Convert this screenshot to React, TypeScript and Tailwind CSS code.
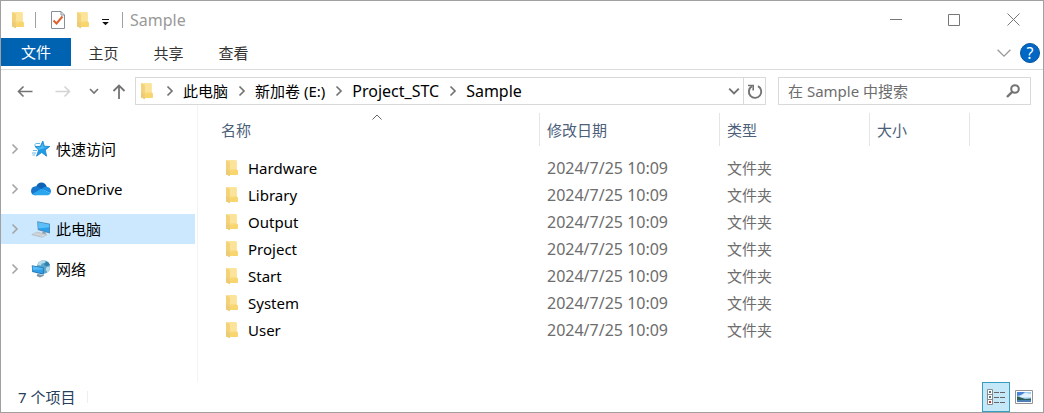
import type { ReactNode } from "react"

const folders = ["Hardware", "Library", "Output", "Project", "Start", "System", "User"]

const crumbs = [
  { name: "此电脑", className: "text-[15px]" },
  { name: "新加卷 (E:)", className: "text-[15px]" },
  { name: "Project_STC", className: "text-base" },
  { name: "Sample", className: "text-base" },
]

function FolderIcon() {
  return (
    <svg width="14" height="18" viewBox="0 0 14 18" className="shrink-0" aria-hidden="true">
      <path d="M1 1.300h9.800c.5 0 .8.300.8.800v8.400l1.200.9v3.900c0 .4-.3.600-.7.600H1z" fill="#f9dc84" />
      <path d="M4.500 1.300h6.300c.5 0 .8.300.8.800v8H4.500z" fill="#fbe499" />
      <path d="M1 1.300l3.200 1.800c.5.300.7.600.7 1.200v12.900L1 15.200z" fill="#f3d27a" />
      <path d="M1 10l3.900 2.500v4.700L1 15.200z" fill="#eccb78" />
      <path d="M4.900 11.500c4 .5 5.500-.5 6.700-1l1.200.9v3.900c0 .4-.3.600-.7.600H4.900z" fill="#f8d56d" />
    </svg>
  )
}

function Chevron({ className = "" }: { className?: string }) {
  return (
    <svg width="10" height="12" viewBox="0 0 10 12" className={`shrink-0 ${className}`} aria-hidden="true">
      <path d="M2.500 1.500L7 6l-4.500 4.500" fill="none" stroke="currentColor" strokeWidth="1.700" />
    </svg>
  )
}

function ChevronDown({ size = 10, strokeWidth = 1.6 }: { size?: number; strokeWidth?: number }) {
  return (
    <svg width={size} height={size} viewBox="0 0 10 10" aria-hidden="true">
      <path d="M1 3l4 4 4-4" fill="none" stroke="currentColor" strokeWidth={strokeWidth} />
    </svg>
  )
}

function StarIcon() {
  return (
    <svg width="20" height="18" viewBox="0 0 20 18" aria-hidden="true">
      <path d="M11.800 1l1.500 5.200 5.500.3-4.500 3.400 1.300 6.300-4.900-3.700-5.200 3.700 2.100-6.200L4 6.500l5.400-.2z" fill="#1f9be3" stroke="#1684cc" strokeWidth=".8" />
      <path d="M11.600 3.200l1.100 4 3.600.2-8.300 2.400-2-2.500 4-.2z" fill="#4cb9f3" />
      <path d="M4.500 3.500h4.500M3 5h2M2 10.500h4M1 13h4M1.500 15h2.500" stroke="#69b9e8" strokeWidth="1" />
    </svg>
  )
}

function OneDriveIcon() {
  return (
    <svg width="20" height="14" viewBox="0 0 20 14" aria-hidden="true">
      <path d="M5.200 4.300C6.300 2 8 .6 10.400.6c2.700 0 4.700 1.600 5.300 4.200L9 9.600z" fill="#0f62b4" />
      <path d="M4.500 13.300C1.900 13.300 0 11.400 0 8.900c0-2.700 2-4.600 4.600-4.700 1.200 0 2 .3 3 .9l5.900 3.600-8.900 4.600z" fill="#1576cc" />
      <path d="M10.800 7.100c1-1.600 2.800-2.500 4.700-2.300 2.600.1 4.500 1.900 4.500 4.300 0 .8-.2 1.600-.6 2.200z" fill="#1a8ee2" />
      <path d="M10.300 6.800l9.200 4.400c-.8 1.400-2 2.100-3.700 2.100H4.500c-1.300 0-2.400-.5-3.200-1.400z" fill="#2aa6ee" />
    </svg>
  )
}

function ComputerIcon() {
  return (
    <svg width="20" height="18" viewBox="0 0 20 18" aria-hidden="true">
      <path d="M6.200 1.200l12.800 2.600v9.700L6.800 10z" fill="#4f87ad" />
      <path d="M7.100 2.200l11.100 2.300v7.900L7.600 9.300z" fill="#2ba0ec" />
      <path d="M7.100 2.200l11.100 2.300v2.700L7.400 8.600z" fill="#5bbffa" />
      <path d="M11.500 11.400l3.500 1-.6 1.900-3.200-.8z" fill="#8b9ba6" />
      <path d="M.8 14.700l5.300-2.600 9.800 2.600-4.700 2.600z" fill="#dcdfe2" stroke="#a5aeb5" strokeWidth=".6" />
      <path d="M3.500 14.500l8 1.800M5.500 13.500l8 1.600" stroke="#b1b7bc" strokeWidth=".5" />
    </svg>
  )
}

function NetworkIcon() {
  return (
    <svg width="20" height="18" viewBox="0 0 20 18" aria-hidden="true">
      <circle cx="12.500" cy="7" r="6.700" fill="#5ba4c9" />
      <path d="M7.800 2.200c2-1.800 4.600-2.200 6.700-1.500l-1 2.300-2.600.5-1 2-3.700-.4zM15.500 7l3.600-.8c.2 2.600-.8 4.800-2.600 6.200l-1.800-2.600z" fill="#b9dbe9" />
      <path d="M13 4.200l3-2.600c1.400.8 2.400 2 2.900 3.400l-3.400 1.200z" fill="#2f7fae" />
      <path d="M.8 5.300l12 2.200v7.200L1.200 12z" fill="#2278b4" />
      <path d="M1.600 6.300l10.300 1.900v5.300L2 11.200z" fill="#2f9fe8" />
      <path d="M1.600 6.300l10.300 1.900v1L1.800 10z" fill="#58bbf7" />
      <path d="M6.500 13.700l3 .7 4 1-4.500 2.100-3.500-1.400z" fill="#7f99aa" />
    </svg>
  )
}

const places: { name: string; icon: ReactNode; active?: boolean }[] = [
  { name: "快速访问", icon: <StarIcon /> },
  { name: "OneDrive", icon: <OneDriveIcon /> },
  { name: "此电脑", icon: <ComputerIcon />, active: true },
  { name: "网络", icon: <NetworkIcon /> },
]

function TitleBar() {
  return (
    <header className="flex h-[37px] items-center pl-[10px]">
      <FolderIcon />
      <span className="ml-[10px] h-4 w-px bg-[#a0a0a0]" />
      <button aria-label="属性" className="ml-[14px]">
        <svg width="16" height="18" viewBox="0 0 16 18" aria-hidden="true">
          <path d="M1.500 .5h9.500l3.500 3.500v13.500h-13z" fill="#fff" stroke="#87909a" />
          <path d="M11 .5v3.500h3.500" fill="none" stroke="#87909a" />
          <path d="M3.500 9.500l3 3 6-7" fill="none" stroke="#e2602f" strokeWidth="2" />
        </svg>
      </button>
      <button aria-label="新建文件夹" className="ml-[10px]">
        <FolderIcon />
      </button>
      <button aria-label="自定义快速访问工具栏" className="ml-[11px] pt-1">
        <svg width="9" height="8" viewBox="0 0 9 8" aria-hidden="true">
          <path d="M1 1.500h7" stroke="#111" strokeWidth="1" />
          <path d="M1.200 4h6.600L4.500 7.300z" fill="#111" />
        </svg>
      </button>
      <span className="ml-3 h-4 w-px bg-[#a0a0a0]" />
      <h1 className="ml-[7px] flex-1 text-base text-[#999999]">Sample</h1>
      <button aria-label="最小化" className="flex h-full w-[58px] items-center justify-center text-[#777777]">
        <svg width="12" height="12" viewBox="0 0 12 12" aria-hidden="true">
          <path d="M0 5.500h12" stroke="currentColor" />
        </svg>
      </button>
      <button aria-label="最大化" className="flex h-full w-[58px] items-center justify-center text-[#777777]">
        <svg width="12" height="12" viewBox="0 0 12 12" aria-hidden="true">
          <path d="M.5 .5h11v11H.5z" fill="none" stroke="currentColor" />
        </svg>
      </button>
      <button aria-label="关闭" className="flex h-full w-[60px] items-center justify-center text-[#777777]">
        <svg width="13" height="13" viewBox="0 0 13 13" aria-hidden="true">
          <path d="M.5 .5l12 12M12.500 .5l-12 12" stroke="currentColor" />
        </svg>
      </button>
    </header>
  )
}

function Ribbon() {
  return (
    <div className="flex h-8 items-start border-b border-[#dadbdc]">
      <button className="h-7 w-[70px] bg-[#0063b1] text-white">文件</button>
      {["主页", "共享", "查看"].map((tab) => (
        <button key={tab} className="h-[30px] w-[65px] text-[#333333]">
          {tab}
        </button>
      ))}
      <div className="ml-auto flex h-[30px] items-center gap-2 pr-[3px]">
        <button aria-label="展开功能区" className="text-[#999999]">
          <ChevronDown size={16} strokeWidth={0.8} />
        </button>
        <button
          aria-label="帮助"
          className="flex size-5 items-center justify-center rounded-full border border-[#0a559c] bg-[#0067c5] text-base leading-none text-white"
        >
          ?
        </button>
      </div>
    </div>
  )
}

function AddressBar() {
  return (
    <div className="flex items-center pt-[7px] pr-3 pl-1 text-[#737373]">
      <button aria-label="后退" className="flex w-10 justify-center">
        <svg width="16" height="14" viewBox="0 0 16 14" aria-hidden="true">
          <path d="M15.500 7.500H1.500M6.500 2.500l-5 5 5 5" fill="none" stroke="currentColor" strokeWidth="1.600" />
        </svg>
      </button>
      <button aria-label="前进" className="flex w-9 justify-center text-[#d4d4d4]">
        <svg width="16" height="14" viewBox="0 0 16 14" aria-hidden="true">
          <path d="M.5 7.500h14M9.500 2.500l5 5-5 5" fill="none" stroke="currentColor" strokeWidth="1.600" />
        </svg>
      </button>
      <button aria-label="最近浏览的位置" className="flex w-[26px] justify-center">
        <ChevronDown />
      </button>
      <button aria-label="上移" className="flex w-6 justify-center">
        <svg width="14" height="16" viewBox="0 0 14 16" aria-hidden="true">
          <path d="M7 16V2.500M1.500 8L7 2.500 12.500 8" fill="none" stroke="currentColor" strokeWidth="1.800" />
        </svg>
      </button>
      <div className="ml-1 flex h-7 flex-1 items-center border border-[#d9d9d9] pl-1">
        <FolderIcon />
        <nav className="flex flex-1 items-center pl-[11px]">
          {crumbs.map((crumb) => (
            <span key={crumb.name} className="flex items-center">
              <Chevron />
              <a href="#" className={`pr-[9px] pl-2 leading-6 whitespace-nowrap text-black ${crumb.className}`}>
                {crumb.name}
              </a>
            </span>
          ))}
        </nav>
        <button aria-label="以前的位置" className="pr-[3px]">
          <ChevronDown size={12} />
        </button>
        <button aria-label="刷新" className="flex h-full w-[22px] items-center justify-center border-l border-[#d9d9d9]">
          <svg width="16" height="16" viewBox="0 0 16 16" aria-hidden="true">
            <path d="M11 3.200A6.200 6.200 0 1 1 4.800 3.400" fill="none" stroke="currentColor" strokeWidth="1.900" />
            <path d="M6.200 7.500V2.500H1" fill="none" stroke="currentColor" strokeWidth="1.600" />
          </svg>
        </button>
      </div>
      <label className="ml-3 flex h-7 w-[253px] items-center border border-[#d9d9d9] pr-[10px] pl-[9px]">
        <input
          type="search"
          aria-label="在 Sample 中搜索"
          placeholder="在 Sample 中搜索"
          className="min-w-0 flex-1 text-[15px] leading-6 outline-none placeholder:text-[#6d6d6d]"
        />
        <svg width="14" height="14" viewBox="0 0 14 14" aria-hidden="true">
          <circle cx="9" cy="5" r="3.800" fill="none" stroke="currentColor" strokeWidth="2" />
          <path d="M6.200 7.800L1 13" stroke="currentColor" strokeWidth="2.400" />
        </svg>
      </label>
    </div>
  )
}

function Sidebar() {
  return (
    <nav className="w-[197px] shrink-0 border-r border-[#f3f3f3] pt-[29px]">
      <ul className="flex flex-col gap-[10px]">
        {places.map((place) => (
          <li key={place.name} className="pr-[2px]">
            <a href="#" className={`flex h-[30px] items-center pl-[9px] ${place.active ? "bg-[#cce8ff]" : ""}`}>
              <Chevron className="text-[#a6a6a6]" />
              <span className="ml-[11px] flex w-5 justify-center">{place.icon}</span>
              <span className="ml-[5px] text-black">{place.name}</span>
            </a>
          </li>
        ))}
      </ul>
    </nav>
  )
}

function FileTable() {
  return (
    <main className="min-w-0 flex-1 pt-2">
      <table className="w-full table-fixed border-collapse text-left">
        <colgroup>
          <col className="w-[342px]" />
          <col className="w-[180px]" />
          <col className="w-[150px]" />
          <col className="w-[100px]" />
          <col />
        </colgroup>
        <thead className="text-[#4c607a]">
          <tr className="align-top">
            <th className="h-[41px] p-0 font-normal">
              <div className="relative h-[33px] border-r border-[#e5e5e5] pl-[23px] leading-[34px]">
                名称
                <svg width="10" height="6" viewBox="0 0 10 6" className="absolute top-px left-1/2 ml-[3px]" aria-hidden="true">
                  <path d="M.5 5.500L5 1l4.500 4.500" fill="none" stroke="#666666" />
                </svg>
              </div>
            </th>
            {["修改日期", "类型", "大小"].map((title) => (
              <th key={title} className="p-0 font-normal">
                <div className="h-[33px] border-r border-[#e5e5e5] pl-[7px] leading-[34px]">{title}</div>
              </th>
            ))}
            <td />
          </tr>
        </thead>
        <tbody className="text-[#6d6d6d]">
          {folders.map((name) => (
            <tr key={name} className="h-[27px]">
              <td className="p-0 pl-[27px] text-black">
                <div className="flex items-center">
                  <FolderIcon />
                  <span className="ml-[9px]">{name}</span>
                </div>
              </td>
              <td className="p-0 pl-[7px] text-base">2024/7/25 10:09</td>
              <td className="p-0 pl-[7px]">文件夹</td>
              <td />
              <td />
            </tr>
          ))}
        </tbody>
      </table>
    </main>
  )
}

function StatusBar() {
  return (
    <footer className="flex h-[30px] items-center pr-[10px] pl-[17px] text-[#26405c]">
      <span>7 个项目</span>
      <span className="ml-3 h-3 w-px bg-[#eeeeee]" />
      <button
        aria-label="详细信息"
        aria-pressed="true"
        className="ml-auto flex h-full w-7 items-center justify-center border border-[#3a9cbc] bg-[#c5e8f8]"
      >
        <svg width="20" height="18" viewBox="0 0 20 18" aria-hidden="true">
          <path d="M1.500 1.500h5v15h-5zM1.500 6.500h5M1.500 11.500h5" fill="#fff" stroke="#8a8a8a" />
          <path d="M3 3h2v2H3zM3 8h2v2H3z" fill="#5c7183" />
          <path d="M3 13h2v2H3z" fill="#b33e2a" />
          <path d="M8 4.500h5M14 4.500h5M8 9.500h5M14 9.500h5M8 14.500h5M14 14.500h5" stroke="#666" />
        </svg>
      </button>
      <button aria-label="大缩略图" className="ml-[5px]">
        <svg width="18" height="14" viewBox="0 0 18 14" aria-hidden="true">
          <path d="M.5 .5h17v13H.5z" fill="#fff" stroke="#929292" />
          <path d="M2 2h14v10H2z" fill="#9ccbf2" />
          <path d="M2 2h8L7 4.500 2 6z" fill="#4a83d6" />
          <path d="M5 6l5-3 6 1v3.500H5z" fill="#e3f2fb" />
          <path d="M2 6.500l4 1 4 1.500 6-.5v1.500H2z" fill="#2f5d55" />
          <path d="M2 10h14v2H2z" fill="#4c7fb8" />
        </svg>
      </button>
    </footer>
  )
}

export default function App() {
  return (
    <div className="flex min-h-screen flex-col border border-[#a0a0a0] bg-white font-['Noto_Sans','Noto_Sans_CJK_SC',sans-serif] text-[15px] leading-6">
      <TitleBar />
      <Ribbon />
      <AddressBar />
      <div className="flex flex-1">
        <Sidebar />
        <FileTable />
      </div>
      <StatusBar />
    </div>
  )
}
